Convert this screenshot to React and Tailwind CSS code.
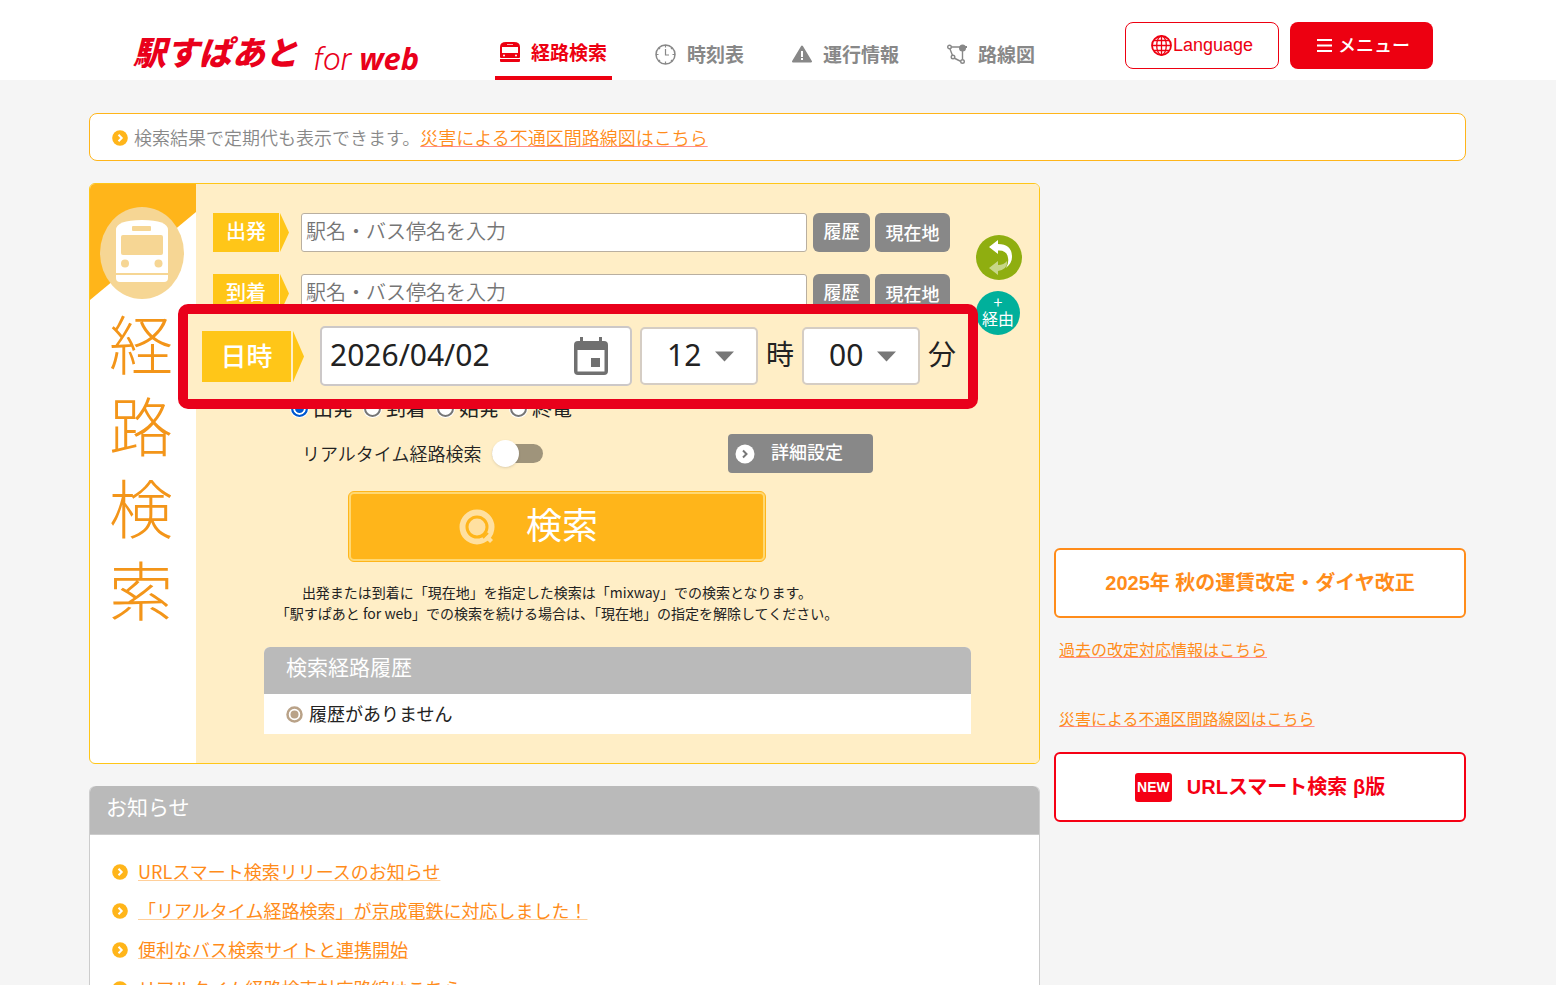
import React from 'react';

const navItems = [
  { label: '経路検索', icon: BusIcon, active: true },
  { label: '時刻表', icon: ClockIcon },
  { label: '運行情報', icon: WarningIcon },
  { label: '路線図', icon: RouteIcon },
];

const news = [
  'URLスマート検索リリースのお知らせ',
  '「リアルタイム経路検索」が京成電鉄に対応しました！',
  '便利なバス検索サイトと連携開始',
  'リアルタイム経路検索対応路線はこちら',
];

const timeTypes = ['出発', '到着', '始発', '終電'];

function BusIcon() {
  return (
    <svg width="20" height="22" viewBox="0 0 20 22" fill="currentColor">
      <path d="M0 6Q0 1 6 1H14Q20 1 20 6V16Q20 17 19 17H1Q0 17 0 16Z" />
      <rect x="2" y="6" width="16" height="6" fill="#fff" />
      <rect x="7" y="3" width="6" height="1" fill="#fff" opacity="0.7" />
      <circle cx="4" cy="14.5" r="1" fill="#fff" />
      <circle cx="16" cy="14.5" r="1" fill="#fff" />
      <path d="M0 18H20V20Q20 21 19 21H1Q0 21 0 20Z" />
    </svg>
  );
}

function ClockIcon() {
  return (
    <svg width="21" height="21" viewBox="0 0 21 21" fill="none" stroke="currentColor" strokeWidth="1.5">
      <circle cx="10.5" cy="10.5" r="9.5" />
      <path d="M10.5 5V11H14" strokeWidth="1.2" />
      <path d="M10.5 1V3.5M10.5 17.5V20M1 10.5H3.5M17.5 10.5H20M4 4L5 5M17 4L16 5M4 17L5 16M17 17L16 16" strokeWidth="1.2" />
    </svg>
  );
}

function WarningIcon() {
  return (
    <svg width="20" height="18" viewBox="0 0 20 18">
      <path d="M10 1.5L19 16.5H1Z" fill="currentColor" stroke="currentColor" strokeWidth="2" strokeLinejoin="round" />
      <rect x="9" y="6" width="2" height="6" fill="#fff" />
      <rect x="9" y="13" width="2" height="2" fill="#fff" />
    </svg>
  );
}

function RouteIcon() {
  return (
    <svg width="20" height="20" viewBox="0 0 20 20" fill="none" stroke="currentColor" strokeWidth="1.4">
      <path d="M4 3H14M3 5L5.5 11.5M7 14L14 17.5M15.5 5V15.5" />
      <circle cx="2.5" cy="3" r="1.8" fill="#fff" />
      <circle cx="6" cy="13" r="1.8" fill="#fff" />
      <circle cx="15.5" cy="17.5" r="1.8" fill="#fff" />
      <circle cx="15.5" cy="4" r="2.8" fill="currentColor" />
      <path d="M14 3H20" strokeWidth="2" />
    </svg>
  );
}

const GlobeIcon = () => (
  <svg width="21" height="21" viewBox="0 0 21 21" fill="none" stroke="#ed0011" strokeWidth="1.3">
    <circle cx="10.5" cy="10.5" r="9.5" strokeWidth="1.8" />
    <ellipse cx="10.5" cy="10.5" rx="4.8" ry="9.5" />
    <path d="M10.5 1V20M1 10.5H20M3 5.5H18M3 15.5H18" />
  </svg>
);

const Bullet = () => (
  <svg className="shrink-0" width="16" height="16" viewBox="0 0 16 16" fill="none">
    <circle cx="8" cy="8" r="7.8" fill="#ffb51a" />
    <path d="M6.5 4.8L9.7 8L6.5 11.2" stroke="#fff" strokeWidth="2" />
  </svg>
);

const TrainBadge = () => (
  <svg className="block" width="106" height="116" viewBox="0 0 106 116">
    <path d="M0 0H106V28L0 116Z" fill="#ffb51a" />
    <ellipse cx="52" cy="69" rx="42" ry="46" fill="#f6d694" />
    <path d="M26 46Q26 36 52 36T78 46V94Q78 98 74 98H30Q26 98 26 94Z" fill="#fff" />
    <rect x="42" y="42" width="19" height="5" rx="1" fill="#f6d694" />
    <rect x="31" y="51" width="42" height="20" rx="2" fill="#f6d694" />
    <circle cx="35" cy="79.5" r="4" fill="#f6d694" />
    <circle cx="68.5" cy="79.5" r="4" fill="#f6d694" />
    <path d="M26 90H78" stroke="#f6d694" strokeWidth="2" />
  </svg>
);

const Station = ({ id, label }) => (
  <div className="flex items-center h-[39px]">
    <label htmlFor={id} className="flex items-center h-full mr-3">
      <span className="flex items-center justify-center w-[66px] h-full pb-1 mr-px bg-[#ffc618] text-white text-[20px] font-medium">
        {label}
      </span>
      <svg width="9" height="39" viewBox="0 0 9 39">
        <path d="M0 0L9 19.5L0 39Z" fill="#ffc618" />
      </svg>
    </label>
    <input
      id={id}
      type="text"
      placeholder="駅名・バス停名を入力"
      className="flex-1 min-w-0 h-full px-1 pb-1 mr-[6px] bg-white border border-[#b9afa0] rounded-[3px] text-[20px] font-[350] placeholder:text-[#757575]"
    />
    <button className="w-[57px] h-full mr-[5px] pb-1 rounded-md bg-[#888] text-white text-[18px] font-medium">履歴</button>
    <button className="w-[75px] h-full rounded-md bg-[#888] text-white text-[18px] font-medium">現在地</button>
  </div>
);

const TimeSelect = ({ label, value }) => (
  <div className="relative">
    <select
      aria-label={label}
      defaultValue={value}
      className="appearance-none block w-[118px] h-[58px] pl-[25px] pb-1 bg-white border-2 border-[#d5cdc4] rounded-[5px] text-[30px] text-[#222] font-['Noto_Sans']"
    >
      <option>{value}</option>
    </select>
    <svg className="absolute right-6 top-6 pointer-events-none" width="19" height="11" viewBox="0 0 19 11">
      <path d="M0 0.5H19L9.5 10.5Z" fill="#777" />
    </svg>
  </div>
);

const DateTimeRow = () => (
  <div className="absolute -left-[35px] -right-[28px] -top-[9px] h-[105px] pl-[14px] pr-3 pb-px flex items-center gap-2 bg-[#ffeec6] border-10 border-[#e9001b] rounded-[10px]">
    <label htmlFor="date" className="flex items-center h-[51px] mr-2">
      <span className="flex items-center justify-center w-[89px] h-full pb-1 mr-[2px] bg-[#ffc618] text-white text-[26px] font-medium">
        日時
      </span>
      <svg width="11" height="51" viewBox="0 0 11 51">
        <path d="M0 0L11 25.5L0 51Z" fill="#ffc618" />
      </svg>
    </label>
    <div className="flex flex-1 min-w-0 items-center h-[60px] bg-white border-2 border-[#ccc8c8] rounded-[5px]">
      <input
        id="date"
        type="text"
        defaultValue="2026/04/02"
        className="flex-1 min-w-0 h-full pl-2 pb-1 text-[30px] text-[#222] font-['Noto_Sans']"
      />
      <button aria-label="カレンダー" className="mr-[22px]">
        <svg width="34" height="38" viewBox="0 0 34 38" fill="#707070">
          <path d="M6 0H9V4H25V0H28V4H30Q34 4 34 8V34Q34 38 30 38H4Q0 38 0 34V8Q0 4 4 4H6ZM3.5 13V34.5H30.5V13Z" fillRule="evenodd" />
          <rect x="17" y="21" width="9" height="9" />
        </svg>
      </button>
    </div>
    <TimeSelect label="時" value="12" />
    <span className="text-[28px] pb-[6px] text-[#222]">時</span>
    <TimeSelect label="分" value="00" />
    <span className="text-[28px] pb-[6px] text-[#222]">分</span>
  </div>
);

const Header = () => (
  <header className="bg-white">
    <div className="max-w-[1378px] h-20 mx-auto pl-11 pr-[34px] flex">
      <a href="#" className="flex items-end w-[362px] text-[#e9001b] italic whitespace-nowrap">
        <span className="pb-1 text-[33px] font-black">駅すぱあと</span>
        <span className="flex items-baseline ml-[15px] leading-[42px]">
          <span className="text-[32px] font-light font-['Roboto']">for</span>
          <span className="ml-2 text-[31px] font-bold font-['Noto_Sans']">web</span>
        </span>
      </a>
      <nav className="flex gap-[38px] whitespace-nowrap">
        {navItems.map(({ label, icon: Icon, active }) => (
          <a
            key={label}
            href="#"
            className={
              active
                ? 'flex items-center gap-[11px] px-[5px] pt-7 border-b-4 border-[#ed0011] text-[#ed0011] text-[19px] font-bold'
                : 'flex items-center gap-[11px] px-[5px] pt-7 text-[#888] text-[19px] font-bold'
            }
          >
            <Icon />
            {label}
          </a>
        ))}
      </nav>
      <div className="flex gap-[11px] ml-auto mt-[22px] h-[47px]">
        <button className="flex items-center justify-center w-[154px] border border-[#ed0011] rounded-lg text-[#ed0011] text-[18px] font-['Liberation_Sans']">
          <GlobeIcon />
          <span className="ml-px">Language</span>
        </button>
        <button className="flex items-center justify-center gap-[6px] w-[143px] pl-1 rounded-lg bg-[#ed0011] text-white text-[18px] font-medium">
          <svg width="15" height="13" viewBox="0 0 15 13" fill="#fff">
            <path d="M0 0H15V2H0ZM0 5.5H15V7.5H0ZM0 11H15V13H0Z" />
          </svg>
          <span className="pb-[2px]">メニュー</span>
        </button>
      </div>
    </div>
  </header>
);

const SearchPanel = () => (
  <section className="flex bg-white border border-[#ffc618] rounded-md overflow-hidden">
    <div className="w-[106px] shrink-0">
      <TrainBadge />
      <h1 className="pr-1 text-center text-[64px] leading-[82px] font-light text-[#f39519]">
        {[...'経路検索'].map((c) => (
          <span key={c} className="block">{c}</span>
        ))}
      </h1>
    </div>

    <div className="flex-1 min-w-0 pt-[29px] pb-[29px] bg-[#ffeec6] text-[#222]">
      <div className="flex pl-[17px] pr-[17px] gap-[26px]">
        <div className="flex-1 min-w-0">
          <Station id="from" label="出発" />
          <div className="h-[22px]" />
          <Station id="to" label="到着" />
          <div className="relative h-[83px]">
            <DateTimeRow />
          </div>
        </div>
        <div className="w-[46px] pt-[22px]">
          <button aria-label="出発と到着を入れ替え" className="block">
            <svg width="46" height="45" viewBox="0 0 46 45" fill="#fff">
              <ellipse cx="23" cy="22.5" rx="23" ry="22.5" fill="#8fae10" />
              <path d="M13 12L22 5V9Q36 9 36 22Q36 28 30 33Q33 28 32 23Q31 15 22 15.5V19Z" />
              <path d="M13 33L22 26V30Q28 30 31 26Q32 34 22 36V40Z" opacity="0.5" />
            </svg>
          </button>
          <button className="block size-11 mt-[11px] pb-[6px] rounded-full bg-[#00b09b] text-white text-[16px] leading-[17px]">
            <span className="block">+</span>
            <span className="block">経由</span>
          </button>
        </div>
      </div>

      <fieldset className="flex gap-[11px] pl-[95px] h-6">
        {timeTypes.map((t, i) => (
          <label key={t} className="flex items-center gap-[5px] text-[20px] leading-6">
            <input
              type="radio"
              name="timeType"
              defaultChecked={i === 0}
              className="appearance-none size-[17px] rounded-full border-2 border-[#767676] bg-white ring-1 ring-white checked:border-[#0059d0] checked:bg-[#0059d0] checked:inset-ring-2 checked:inset-ring-white"
            />
            {t}
          </label>
        ))}
      </fieldset>

      <div className="flex items-center justify-between mt-[14px] pl-[106px] pr-[166px]">
        <label className="flex items-center text-[18px] font-[350]">
          リアルタイム経路検索
          <input type="checkbox" role="switch" className="peer sr-only" />
          <span className="flex items-center w-[51px] h-[27px] ml-[11px]">
            <span className="flex items-center w-full h-[19px] rounded-full bg-[#9f947b]">
              <span className="size-[27px] shrink-0 rounded-full bg-white shadow" />
            </span>
          </span>
        </label>
        <button className="flex items-center w-[145px] h-[39px] pl-[7px] rounded bg-[#888] text-white text-[18px] font-medium">
          <svg width="20" height="20" viewBox="0 0 20 20" fill="none">
            <circle cx="10" cy="10" r="9.5" fill="#fff" />
            <path d="M8 6.5L11.5 10L8 13.5" stroke="#777" strokeWidth="2" />
          </svg>
          <span className="ml-4 pb-1">詳細設定</span>
        </button>
      </div>

      <div className="mr-[121px] flex flex-col items-center">
        <button className="flex items-center w-[418px] h-[71px] mt-[18px] p-[2px] border border-[#ffb51a] rounded-md bg-[#ffd873]">
          <span className="flex items-center w-full h-full pl-[108px] rounded-[3px] bg-[#ffb51a] text-white text-[36px]">
            <svg width="36" height="36" viewBox="0 0 36 36" fill="none">
              <circle cx="18" cy="18" r="14.5" stroke="#ffe0a0" strokeWidth="6" />
              <circle cx="18" cy="18" r="8.5" fill="#ffe0a0" />
              <path d="M24 29L29 24" stroke="#ffb51a" strokeWidth="2" />
              <path d="M27 36L36 27V36Z" fill="#ffb51a" />
              <path d="M26 29L29 26L34 31L31 34Z" fill="#ffe0a0" />
            </svg>
            <span className="ml-[31px] pb-2">検索</span>
          </span>
        </button>
        <p className="mt-5 text-center text-[14px] leading-[21px]">
          出発または到着に「現在地」を指定した検索は「mixway」での検索となります。
          <br />
          「駅すぱあと for web」での検索を続ける場合は、「現在地」の指定を解除してください。
        </p>
      </div>

      <div className="mt-[23px] mx-[68px] bg-white rounded-t-md">
        <h2 className="h-[47px] pl-[22px] pt-[2px] leading-[34px] rounded-t-md bg-[#bababa] text-white text-[21px]">検索経路履歴</h2>
        <p className="flex items-center h-10 pl-[22px] text-[18px]">
          <svg className="mr-[6px]" width="17" height="17" viewBox="0 0 17 17" fill="none">
            <circle cx="8.5" cy="8.5" r="7" stroke="#b9a288" strokeWidth="2.5" />
            <circle cx="8.5" cy="8.5" r="4" fill="#b9a288" />
          </svg>
          <span className="pb-[2px]">履歴がありません</span>
        </p>
      </div>
    </div>
  </section>
);

const App = () => {
  return (
    <div className="h-screen overflow-hidden bg-[#f5f5f5] font-['Noto_Sans_CJK_JP',sans-serif]">
      <Header />
      <main className="max-w-[1378px] mx-auto pt-[33px] pr-px">
        <p className="flex items-center h-12 pl-[22px] pt-[2px] bg-white border border-[#ffb51a] rounded-lg text-[18px] text-[#888] font-[350]">
          <Bullet />
          <span className="ml-[6px] pb-px">検索結果で定期代も表示できます。</span>
          <a href="#" className="pb-px text-[#ff8c1a] underline decoration-[#ff8f8f] decoration-1">災害による不通区間路線図はこちら</a>
        </p>

        <div className="flex gap-[14px] mt-[22px]">
          <div className="flex-1 min-w-0">
            <SearchPanel />
            <section className="mt-[22px] bg-white border border-t-0 border-[#ccc] rounded-t-md">
              <h2 className="h-12 pl-4 pt-[3px] leading-[34px] rounded-t-md bg-[#bababa] text-white text-[21px]">お知らせ</h2>
              <ul className="pt-[17px] pb-6 border-t border-[#ccc]">
                {news.map((item) => (
                  <li key={item} className="flex items-center h-[39px] pl-[22px] text-[18px]">
                    <Bullet />
                    <a href="#" className="ml-[10px] text-[#ff8c1a] underline decoration-[#ffcf9a] decoration-1">{item}</a>
                  </li>
                ))}
              </ul>
            </section>
          </div>

          <aside className="w-[412px] shrink-0 pt-[365px] text-[#ff8c1a] text-[16px]">
            <a href="#" className="flex items-center justify-center h-[70px] bg-white border-2 border-[#ff8c1a] rounded-md text-[20px] font-bold font-['Liberation_Sans','Noto_Sans_CJK_JP',sans-serif]">
              2025年 秋の運賃改定・ダイヤ改正
            </a>
            <a href="#" className="block w-fit mt-[19px] ml-[5px] leading-6 underline decoration-[#ff8f8f] decoration-1">過去の改定対応情報はこちら</a>
            <a href="#" className="block w-fit mt-[45px] ml-[5px] leading-6 underline decoration-[#ff8f8f] decoration-1">災害による不通区間路線図はこちら</a>
            <a href="#" className="flex items-center justify-center mt-[22px] h-[70px] bg-white border-2 border-[#f50014] rounded-md text-[#f50014] text-[20px] font-bold font-['Liberation_Sans','Noto_Sans_CJK_JP',sans-serif]">
              <span className="flex items-center justify-center w-[37px] h-[29px] mr-[15px] rounded-[3px] bg-[#f50014] text-white text-[14px]">NEW</span>
              URLスマート検索 β版
            </a>
          </aside>
        </div>
      </main>
    </div>
  );
};

export default App;
